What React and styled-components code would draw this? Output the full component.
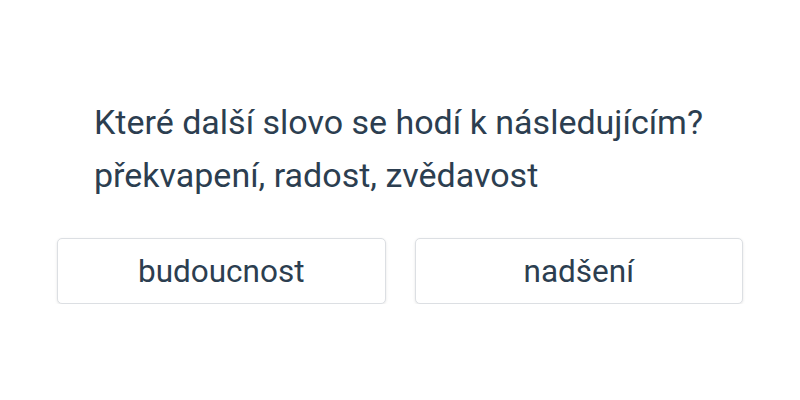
import React from 'react';
import styled, { createGlobalStyle } from 'styled-components';

const GlobalStyle = createGlobalStyle`
  html, body {
    margin: 0;
    padding: 0;
    background: #ffffff;
  }
  body {
    font-family: Roboto, "Noto Sans", sans-serif;
    color: #2c3e50;
  }
`;

const Quiz = styled.main`
  width: 686px;
  margin: 0 auto;
  padding-top: 96px;
  box-sizing: border-box;
`;

const Question = styled.div`
  padding: 0 37px;
  font-size: 34px;
  line-height: 53px;
  color: #2c3e50;
`;

const Answers = styled.div`
  display: grid;
  grid-template-columns: 1fr 1fr;
  gap: 29px;
  margin-top: 36px;
`;

const Answer = styled.button`
  height: 66px;
  background: #fff;
  border: 1px solid #dcdfe3;
  border-radius: 5px;
  box-shadow: 0 1px 3px rgba(0, 0, 0, 0.1);
  font-family: Roboto, "Noto Sans", sans-serif;
  font-size: 31.5px;
  color: #2c3e50;
  cursor: pointer;
`;

const options = ['budoucnost', 'nadšení'];

export default function App() {
  return (
    <>
      <GlobalStyle />
      <Quiz>
        <Question>
          <div>Které další slovo se hodí k následujícím?</div>
          <div>překvapení, radost, zvědavost</div>
        </Question>
        <Answers>
          {options.map((o) => (
            <Answer key={o}>{o}</Answer>
          ))}
        </Answers>
      </Quiz>
    </>
  );
}
